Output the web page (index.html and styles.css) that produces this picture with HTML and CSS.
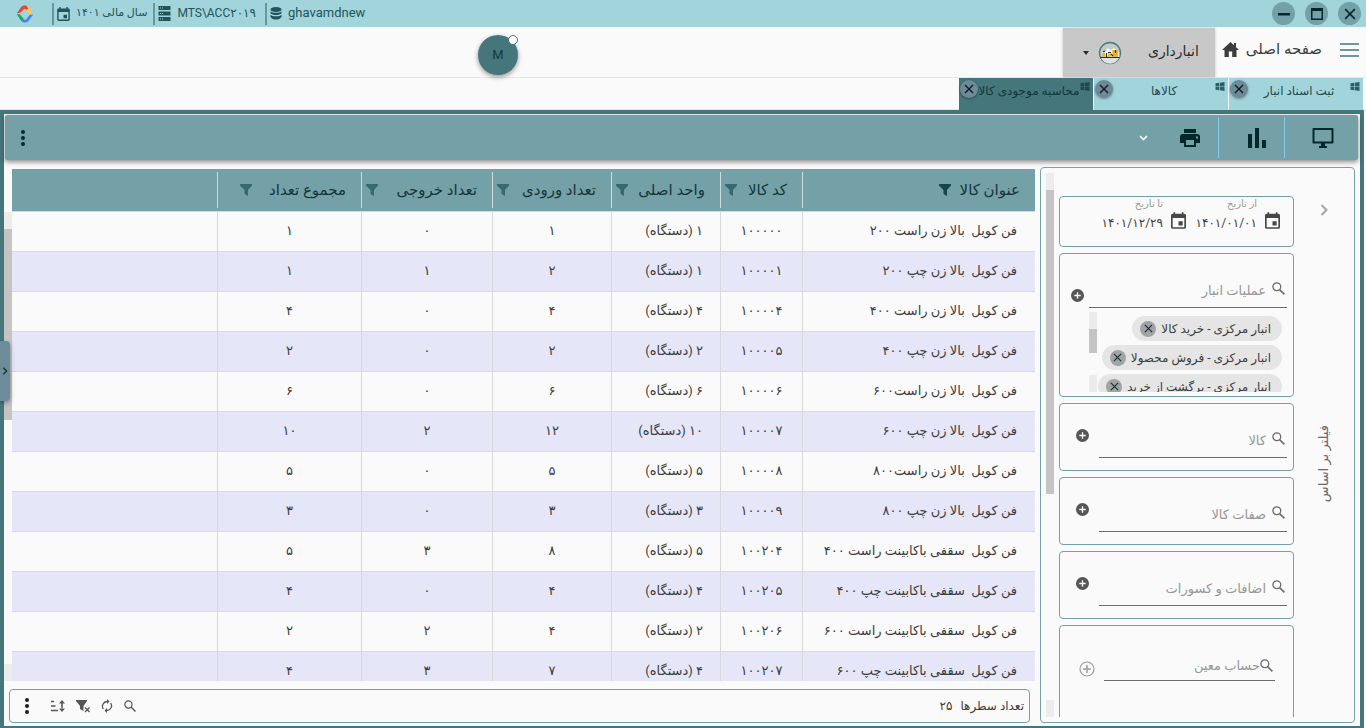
FILE: index.html
```html
<!DOCTYPE html>
<html lang="fa" dir="rtl">
<head>
<meta charset="utf-8">
<title>انبارداری</title>
<link rel="stylesheet" href="styles.css">
</head>
<body>
<svg class="defs" aria-hidden="true">
  <symbol id="funnel" viewBox="0 0 12 12"><path d="M0 0h12v1.500L8 6v6l-3.500-2V6L0 1.500z"/></symbol>
  <symbol id="x" viewBox="0 0 10 10"><path d="M1 1l8 8M9 1l-8 8" fill="none" stroke="currentColor" stroke-width="1.400"/></symbol>
  <symbol id="win" viewBox="0 0 10 10"><path d="M0 1.500l4.300-.7v3.900H0zM5 .7L10 0v4.700H5zM0 5.400h4.300v3.900L0 8.600zM5 5.400h5V10l-5-.7z"/></symbol>
  <symbol id="search" viewBox="0 0 13 13"><circle cx="4.800" cy="4.800" r="3.900" fill="none" stroke="currentColor" stroke-width="1.300"/><path d="M7.600 7.600l4.800 4.800" stroke="currentColor" stroke-width="1.500"/></symbol>
  <symbol id="cal" viewBox="0 0 18 20"><path d="M16 2h-1V0h-2v2H5V0H3v2H2a2 2 0 0 0-2 2v14a2 2 0 0 0 2 2h14a2 2 0 0 0 2-2V4a2 2 0 0 0-2-2zm0 16H2V7h14zm-2-7H9v5h5z" fill-rule="evenodd"/></symbol>
  <symbol id="plus" viewBox="0 0 20 20"><path d="M10 0a10 10 0 1 0 0 20 10 10 0 0 0 0-20zm5 11h-4v4H9v-4H5V9h4V5h2v4h4z"/></symbol>
  <symbol id="dots" viewBox="0 0 4 16"><circle cx="2" cy="2" r="2"/><circle cx="2" cy="8" r="2"/><circle cx="2" cy="14" r="2"/></symbol>
  <symbol id="chev" viewBox="0 0 8 12"><path d="M1.500 1l5 5-5 5" fill="none" stroke="currentColor" stroke-width="2"/></symbol>
</svg>

<header class="titlebar">
  <div class="win-buttons">
    <button aria-label="بستن"><svg width="12" height="12"><use href="#x"/></svg></button>
    <button aria-label="بزرگ‌نمایی"><svg width="12" height="12" viewBox="0 0 12 12"><path d="M0 0h12v12H0zM1.500 3v7.500h9V3z" fill-rule="evenodd"/></svg></button>
    <button aria-label="کوچک‌نمایی"><svg width="12" height="12" viewBox="0 0 12 12"><path d="M0 5h12v2.500H0z"/></svg></button>
  </div>
  <div class="status" dir="ltr">
    <svg class="logo" width="18" height="18" viewBox="0 0 18 18"><path d="M.8 8.500L5 2.200Q6 .6 8 .6h2.500l2.300 3-2 1.600L9.500 4H8L4.800 7.500z" fill="#dc4b3f"/><path d="M10.500 .6q1.500.4 2.300 1.600l4.400 6.300-4 1.300L10 5.500l2.300-1.800z" fill="#fbc94f"/><path d="M17.200 9.500l-4.500 6.300q-1 1.600-2.700 1.600H8q-1.600 0-2.600-1.400l2.400-2 1 .7h1l4-5z" fill="#4387f5"/><path d="M.8 9.300h3l4 4.700-2.400 2.200z" fill="#1da462"/></svg>
    <span class="status-item"><svg width="13" height="14"><use href="#cal"/></svg><span class="fa" dir="rtl">سال مالی ۱۴۰۱</span></span>
    <span class="status-item"><svg width="13" height="15" viewBox="0 0 13 15"><path d="M.5 0h12v4H.5zM.5 5.500h12v4H.5zM.5 11h12v4H.5z"/><path d="M2 2h1M4 2h1M2 7.500h1M4 7.500h1M2 13h1M4 13h1" stroke="#a2d4dc"/></svg><span class="server">MTS\ACC۲۰۱۹</span></span>
    <span class="status-item"><svg width="12" height="13" viewBox="0 0 12 13"><ellipse cx="6" cy="2.500" rx="5.500" ry="2.500"/><path d="M.5 4.200c2 2 9 2 11 0v2c-2 2.400-9 2.400-11 0zM.5 7.800c2 2 9 2 11 0V10c-2 3.400-9 3.400-11 0z"/></svg><span>ghavamdnew</span></span>
  </div>
</header>

<nav class="menubar">
  <button class="burger" aria-label="منو"><svg width="19" height="14" viewBox="0 0 19 14"><path d="M0 1h19M0 7h19M0 13h19" stroke="#6f95a5" stroke-width="2"/></svg></button>
  <a class="home" href="#"><span>صفحه اصلی</span><svg width="17" height="15" viewBox="0 0 17 15"><path d="M8.500 0L0 8h2.500v7h4.300V9.500h3.400V15h4.300V8H17l-3-2.800V1h-2v2.300z"/></svg></a>
  <button class="module"><span>انبارداری</span>
    <svg width="24" height="24" viewBox="0 0 24 24"><circle cx="12" cy="12" r="10.500" fill="#c3cacd" stroke="#4a7a80" stroke-width="1.300"/><path d="M3 17h18a10 10 0 0 1-18 0z" fill="#dfe2e4"/><path d="M2.500 15l2-4 4-1 1-3 3 2v1l3-3 5 3 1 6z" fill="#f7f7f5"/><path d="M3 15.500l1-3 3-1v4zM10 15.500v-3h3v3zM14 9h6v7h-5z" fill="#eeb71b"/><path d="M2.500 16.500h19M5 11l2-1M8.500 12v4M13 13l2 2M17.500 9v3M10 11.500h3" stroke="#232a2e" stroke-width="1.200"/></svg>
    <svg width="6" height="4" viewBox="0 0 6 4"><path d="M0 0h6L3 4z"/></svg></button>
  <button class="avatar"><span>M</span><i></i></button>
</nav>

<div class="tabs">
  <div class="tab"><svg class="win" width="10" height="9"><use href="#win"/></svg><a href="#">ثبت اسناد انبار</a><button aria-label="بستن"><svg width="10" height="10"><use href="#x"/></svg></button></div>
  <div class="tab"><svg class="win" width="10" height="9"><use href="#win"/></svg><a href="#">کالاها</a><button aria-label="بستن"><svg width="10" height="10"><use href="#x"/></svg></button></div>
  <div class="tab active"><svg class="win" width="10" height="9"><use href="#win"/></svg><a href="#">محاسبه موجودی کالا</a><button aria-label="بستن"><svg width="10" height="10"><use href="#x"/></svg></button></div>
</div>

<main class="frame">
  <button class="handle" aria-label="باز کردن"><svg width="6" height="8"><use href="#chev"/></svg></button>
  <div class="page">
    <div class="toolbar">
      <button aria-label="نمایش"><svg width="22" height="20" viewBox="0 0 22 20"><path d="M1.500 1h19v13.500h-19z" fill="none" stroke="currentColor" stroke-width="2" stroke-linejoin="round"/><path d="M9 15h4v3h2v2H7v-2h2z"/></svg></button>
      <button aria-label="نمودار"><svg width="18" height="20" viewBox="0 0 18 20"><path d="M0 6h4v14H0zM7 0h4v20H7zM14 12h4v8h-4z"/></svg></button>
      <button aria-label="چاپ"><svg width="20" height="18" viewBox="0 0 20 18"><path d="M4 0h12v4H4zM3 5h14a3 3 0 0 1 3 3v6h-4v4H4v-4H0V8a3 3 0 0 1 3-3zm3 6v5h8v-5zm10-3.500v2h2v-2z" fill-rule="evenodd"/></svg></button>
      <button class="more-print" aria-label="گزینه‌های چاپ"><svg width="9" height="6" viewBox="0 0 9 6"><path d="M1 1l3.500 3.500L8 1" fill="none" stroke="currentColor" stroke-width="1.600"/></svg></button>
      <button class="kebab" aria-label="بیشتر"><svg width="4" height="16"><use href="#dots"/></svg></button>
    </div>

    <div class="content">
      <aside class="filters">
        <div class="rail"><button aria-label="بستن فیلتر"><svg width="8" height="12"><use href="#chev"/></svg></button><span>فیلتر بر اساس</span></div>
        <div class="cards">
          <section class="card dates">
            <svg width="15" height="17"><use href="#cal"/></svg>
            <label>از تاریخ<input value="۱۴۰۱/۰۱/۰۱"></label>
            <svg width="15" height="17"><use href="#cal"/></svg>
            <label>تا تاریخ<input value="۱۴۰۱/۱۲/۲۹"></label>
          </section>
          <section class="card ops">
            <div class="ops-main">
              <div class="field"><svg width="13" height="13"><use href="#search"/></svg><input aria-label="عملیات انبار" placeholder="عملیات انبار"></div>
              <div class="chip-area">
                <div class="chips">
                  <span class="chip">انبار مرکزی - خرید کالا<button aria-label="حذف"><svg width="9" height="9"><use href="#x"/></svg></button></span>
                  <span class="chip">انبار مرکزی - فروش محصولا<button aria-label="حذف"><svg width="9" height="9"><use href="#x"/></svg></button></span>
                  <span class="chip">انبار مرکزی - برگشت از خرید<button aria-label="حذف"><svg width="9" height="9"><use href="#x"/></svg></button></span>
                </div>
                <div class="scroll chip-scroll"><i></i><b></b><i></i></div>
              </div>
            </div>
            <button class="add" aria-label="افزودن"><svg width="13" height="13"><use href="#plus"/></svg></button>
          </section>
          <section class="card single"><div class="field"><svg width="13" height="13"><use href="#search"/></svg><input aria-label="کالا" placeholder="کالا"></div><button class="add" aria-label="افزودن"><svg width="13" height="13"><use href="#plus"/></svg></button></section>
          <section class="card single"><div class="field"><svg width="13" height="13"><use href="#search"/></svg><input aria-label="صفات کالا" placeholder="صفات کالا"></div><button class="add" aria-label="افزودن"><svg width="13" height="13"><use href="#plus"/></svg></button></section>
          <section class="card single"><div class="field"><svg width="13" height="13"><use href="#search"/></svg><input aria-label="اضافات و کسورات" placeholder="اضافات و کسورات"></div><button class="add" aria-label="افزودن"><svg width="13" height="13"><use href="#plus"/></svg></button></section>
          <section class="card account"><div class="field"><svg width="13" height="13"><use href="#search"/></svg><input aria-label="حساب معین" placeholder="حساب معین"></div><button class="add" aria-label="افزودن"><svg width="16" height="16" viewBox="0 0 16 16"><circle cx="8" cy="8" r="7" fill="none" stroke="currentColor" stroke-width="1.200"/><path d="M8 4v8M4 8h8" stroke="currentColor" stroke-width="1.500"/></svg></button></section>
        </div>
        <div class="scroll filter-scroll"><i></i><b></b><i></i></div>
      </aside>

      <section class="grid">
        <div class="table-area">
          <div class="table-clip">
            <table>
              <colgroup><col class="c-title"><col class="c-code"><col class="c-unit"><col class="c-in"><col class="c-out"><col class="c-sum"><col></colgroup>
              <thead><tr>
                <th class="title"><div>عنوان کالا<svg width="12" height="12"><use href="#funnel"/></svg></div></th>
                <th><div>کد کالا<svg width="12" height="12"><use href="#funnel"/></svg></div></th>
                <th><div>واحد اصلی<svg width="12" height="12"><use href="#funnel"/></svg></div></th>
                <th><div>تعداد ورودی<svg width="12" height="12"><use href="#funnel"/></svg></div></th>
                <th><div>تعداد خروجی<svg width="12" height="12"><use href="#funnel"/></svg></div></th>
                <th class="sum"><div>مجموع تعداد<svg width="12" height="12"><use href="#funnel"/></svg></div></th>
                <th></th>
              </tr></thead>
              <tbody>
                <tr><td>فن کویل  بالا زن راست ۲۰۰</td><td>۱۰۰۰۰۰</td><td>۱ (دستگاه)</td><td>۱</td><td>۰</td><td>۱</td><td></td></tr>
                <tr><td>فن کویل  بالا زن چپ ۲۰۰</td><td>۱۰۰۰۰۱</td><td>۱ (دستگاه)</td><td>۲</td><td>۱</td><td>۱</td><td></td></tr>
                <tr><td>فن کویل  بالا زن راست ۴۰۰</td><td>۱۰۰۰۰۴</td><td>۴ (دستگاه)</td><td>۴</td><td>۰</td><td>۴</td><td></td></tr>
                <tr><td>فن کویل  بالا زن چپ ۴۰۰</td><td>۱۰۰۰۰۵</td><td>۲ (دستگاه)</td><td>۲</td><td>۰</td><td>۲</td><td></td></tr>
                <tr><td>فن کویل  بالا زن راست۶۰۰</td><td>۱۰۰۰۰۶</td><td>۶ (دستگاه)</td><td>۶</td><td>۰</td><td>۶</td><td></td></tr>
                <tr><td>فن کویل  بالا زن چپ ۶۰۰</td><td>۱۰۰۰۰۷</td><td>۱۰ (دستگاه)</td><td>۱۲</td><td>۲</td><td>۱۰</td><td></td></tr>
                <tr><td>فن کویل  بالا زن راست۸۰۰</td><td>۱۰۰۰۰۸</td><td>۵ (دستگاه)</td><td>۵</td><td>۰</td><td>۵</td><td></td></tr>
                <tr><td>فن کویل  بالا زن چپ ۸۰۰</td><td>۱۰۰۰۰۹</td><td>۳ (دستگاه)</td><td>۳</td><td>۰</td><td>۳</td><td></td></tr>
                <tr><td>فن کویل  سقفی باکابینت راست ۴۰۰</td><td>۱۰۰۲۰۴</td><td>۵ (دستگاه)</td><td>۸</td><td>۳</td><td>۵</td><td></td></tr>
                <tr><td>فن کویل  سقفی باکابینت چپ ۴۰۰</td><td>۱۰۰۲۰۵</td><td>۴ (دستگاه)</td><td>۴</td><td>۰</td><td>۴</td><td></td></tr>
                <tr><td>فن کویل  سقفی باکابینت راست ۶۰۰</td><td>۱۰۰۲۰۶</td><td>۲ (دستگاه)</td><td>۴</td><td>۲</td><td>۲</td><td></td></tr>
                <tr><td>فن کویل  سقفی باکابینت چپ ۶۰۰</td><td>۱۰۰۲۰۷</td><td>۴ (دستگاه)</td><td>۷</td><td>۳</td><td>۴</td><td></td></tr>
              </tbody>
            </table>
          </div>
          <div class="scroll table-scroll"><i></i><b></b><i></i></div>
        </div>
        <footer class="gridbar">
          <span>تعداد سطرها</span><span class="count">۲۵</span>
          <div class="gridbar-tools">
            <button aria-label="جستجو"><svg width="12" height="12"><use href="#search"/></svg></button>
            <button aria-label="بازخوانی"><svg width="12" height="14" viewBox="0 0 12 14"><path d="M2.300 10A4.800 4.800 0 0 1 6 2.500M9.700 4A4.800 4.800 0 0 1 6 11.500" fill="none" stroke="currentColor" stroke-width="1.300"/><path d="M6 0v5l2.500-2.500zM6 9v5L3.500 11.500z"/></svg></button>
            <button aria-label="حذف فیلتر"><svg width="14" height="14" viewBox="0 0 14 14"><path d="M0 1h11v1L7.500 7v5L4 10V7L0 2z"/><path d="M9 8.500l4.500 4.500M13.500 8.500L9 13" stroke="currentColor" stroke-width="1.300"/></svg></button>
            <button aria-label="مرتب‌سازی"><svg width="14" height="12" viewBox="0 0 14 12"><path d="M0 1.500h3M0 6h4.500M0 10.500h7" stroke="currentColor" stroke-width="1.500"/><path d="M10.200 3h1.600v6h-1.600zM11 0l3 3.500H8zM11 12l3-3.500H8z"/></svg></button>
            <button class="kebab" aria-label="بیشتر"><svg width="4" height="16"><use href="#dots"/></svg></button>
          </div>
        </footer>
      </section>
    </div>
  </div>
</main>
</body>
</html>
```

FILE: styles.css
```css
* { box-sizing: border-box; }
body {
  margin: 0;
  height: 100vh;
  display: flex;
  flex-direction: column;
  overflow: hidden;
  background: #fafafa;
  color: #3c3c3c;
  font: 13px/20px Roboto, "DejaVu Sans", sans-serif;
}
button, input { font: inherit; color: inherit; border: 0; background: none; padding: 0; margin: 0; }
button { display: flex; align-items: center; justify-content: center; flex: none; }
a { color: inherit; text-decoration: none; }
svg { display: block; flex: none; fill: currentColor; }
.defs { position: absolute; width: 0; height: 0; }

.titlebar {
  flex: none;
  height: 27px;
  background: #a2d4dc;
  color: #1f5459;
  display: flex;
  justify-content: space-between;
}
.win-buttons { display: flex; align-items: center; gap: 10px; padding-right: 5px; }
.win-buttons button { width: 23px; height: 23px; border-radius: 50%; background: #73a1a7; color: #03282c; }
.status { display: flex; align-items: center; padding-left: 16px; }
.logo { margin-right: 18px; }
.status-item { display: flex; align-items: center; gap: 6px; height: 22px; padding: 0 6px 0 3px; border-left: 2px solid #6499a0; }
.status-item span { line-height: 18px; margin-bottom: 2px; }
.status-item .fa { font-size: 11px; }
.status-item .server { font-size: 12px; margin-right: 3px; }

.menubar {
  flex: none;
  height: 51px;
  display: flex;
  align-items: flex-start;
  border-bottom: 1px solid #e6e6e6;
  padding: 1px 7px 0 0;
}
.burger { width: 19px; height: 44px; }
.home { display: flex; align-items: center; gap: 7px; height: 42px; margin: 0 18px 0 7px; font-size: 15px; }
.module {
  width: 152px;
  height: 49px;
  background: #c8c8c8;
  box-shadow: 0 0 3px #c0c0c0;
  font-size: 14px;
  justify-content: flex-start;
  padding-right: 16px;
  color: #2b2b2b;
}
.module span { margin: 0 0 4px 26px; }
.module svg + svg { margin-right: 9px; }
.avatar {
  position: relative;
  width: 40px;
  height: 40px;
  margin: 7px auto 0 478px;
  border-radius: 50%;
  background: #45767b;
  color: #17393d;
  box-shadow: 0 2px 5px rgba(0, 0, 0, .4);
  font-size: 13px;
}
.avatar i { position: absolute; top: 0; right: 0; width: 10px; height: 10px; border: 1px solid #45767b; border-radius: 50%; background: #fff; }

.tabs { flex: none; height: 32px; display: flex; gap: 1px; padding-right: 3px; border-bottom: 1px solid #e6e6e6; }
.tab { display: flex; align-items: flex-start; justify-content: space-between; width: 134px; height: 32px; padding: 2px 3px 0 1px; background: #a2d4dc; color: #28474b; font-size: 12px; }
.tab .win { margin-top: 2px; color: #2a6064; }
.tab a { line-height: 22px; white-space: nowrap; }
.tab button { width: 18px; height: 18px; border-radius: 50%; background: #6d8a9a; color: #16191b; box-shadow: 0 1px 3px rgba(0, 0, 0, .35); }
.tab.active { background: #45767b; color: #14363a; }
.tab.active .win { color: #1c4b50; }

.frame { position: relative; flex: 1; min-height: 0; display: flex; margin-right: 2px; padding: 4px 4px 2px; background: #45767b; }
.page { flex: 1; min-width: 0; display: flex; flex-direction: column; background: #fafafa; }
.handle { position: absolute; left: 0; top: 231px; width: 10px; height: 60px; border-radius: 0 4px 4px 0; background: #6d8c99; color: #0f383d; box-shadow: 0 2px 5px rgba(0, 0, 0, .35); }

.toolbar {
  flex: none;
  display: flex;
  height: 45px;
  margin: 1px 2px 0 1px;
  padding-right: 8px;
  border-radius: 2px;
  background: #73a1a7;
  color: #03282c;
  box-shadow: 0 2px 5px rgba(0, 0, 0, .45);
}
.toolbar button { width: 66px; height: 41px; margin-top: 2px; padding-left: 10px; border-left: 1px solid #82cdf0; }
.toolbar button:nth-child(3) { width: 56px; padding: 0; border: 0; }
.toolbar .more-print { width: 38px; padding: 0; border: 0; color: #fff; }
.toolbar .kebab { width: 36px; padding: 0; margin-right: auto; border: 0; }

.content { flex: 1; min-height: 0; display: flex; padding: 7px 5px 3px 0; }
.scroll { width: 8px; flex: none; display: flex; flex-direction: column; }
.scroll i { height: 17px; flex: none; background: #ececec; }
.scroll b { background: #c4c4c4; }
.scroll i:last-child { margin-top: auto; }

.filters { flex: none; width: 315px; display: flex; border: 1px solid #73a1a7; border-radius: 4px; padding: 5px 0 5px 5px; }
.rail { width: 60px; display: flex; flex-direction: column; align-items: center; padding-top: 31px; color: #6b6b6b; }
.rail button { color: #a5a5a5; }
.rail span { writing-mode: vertical-rl; transform: rotate(180deg); margin-top: 209px; }
.cards { flex: 1; min-width: 0; display: flex; flex-direction: column; gap: 6px; padding: 23px 0 0 5px; overflow: hidden; }
.card { flex: none; display: flex; border: 1px solid #73a1a7; border-radius: 4px; }
.filter-scroll b { height: 304px; }

.dates { height: 51px; padding: 0 13px 0 0; color: #474747; }
.dates svg { margin-top: 15px; }
.dates label { display: block; width: 64px; margin: 0 8px 0 7px; font-size: 10px; line-height: 14px; color: #979797; }
.dates input { display: block; width: 100%; height: 23px; font-size: 12px; color: #3c3c3c; }

.field { flex: 1; min-width: 0; display: flex; gap: 6px; border-bottom: 1px solid #6a6a6a; color: #6a6a6a; }
.field input { flex: 1; min-width: 0; height: 18px; }
.field input::placeholder { color: #979797; opacity: 1; }
.add { color: #565656; }

.ops { height: 144px; padding: 28px 6px 5px 11px; align-items: flex-start; }
.ops-main { flex: 1; min-width: 0; height: 110px; display: flex; flex-direction: column; }
.ops .field { flex: none; height: 26px; padding-right: 2px; }
.ops .add { width: 18px; height: 26px; justify-content: flex-end; }
.chip-area { flex: 1; min-height: 0; display: flex; padding-top: 4px; }
.chips { flex: 1; min-width: 0; display: flex; flex-direction: column; gap: 4px; overflow: hidden; padding: 4px 5px 0 0; }
.chip { flex: none; align-self: flex-start; display: flex; align-items: center; height: 25px; padding: 0 11px 0 8px; gap: 5px; border-radius: 13px; background: #e5e5e5; font-size: 12px; white-space: nowrap; }
.chip button { width: 16px; height: 16px; border-radius: 50%; background: #a3a3a3; color: #12383c; }
.chip-scroll b { height: 24px; }

.single { height: 68px; padding: 28px 6px 12px 16px; }
.single .field { padding-right: 2px; }
.single .add { width: 23px; height: 7px; justify-content: flex-end; }
.account { height: 110px; padding: 28px 18px 0 19px; }
.account .field { height: 27px; gap: 0; padding-right: 2px; }
.account .field svg { margin-top: 5px; }
.account .field input { height: 22px; }
.account .add { width: 25px; height: 30px; justify-content: flex-end; color: #9c9c9c; }

.grid { flex: 1; min-width: 0; display: flex; flex-direction: column; margin-right: 5px; }
.table-area { flex: 1; min-height: 0; display: flex; padding-top: 2px; }
.table-clip { flex: 1; min-width: 0; overflow: hidden; }
.table-scroll { padding-top: 43px; }
.table-scroll b { height: 191px; }
table { width: 100%; table-layout: fixed; border-collapse: separate; border-spacing: 0; }
.c-title { width: 233px; }
.c-code { width: 82px; }
.c-unit { width: 109px; }
.c-in { width: 119px; }
.c-out { width: 131px; }
.c-sum { width: 144px; }
th { height: 43px; padding: 0; background: #73a1a7; border-bottom: 1px solid #d9d9d9; color: #14363a; font-size: 15px; font-weight: 400; white-space: nowrap; }
th div { display: flex; align-items: center; justify-content: space-between; height: 36px; padding: 0 15px 0 4px; border-left: 1px solid #d0dadb; }
th.title div { justify-content: flex-start; gap: 9px; }
th.sum div { padding-left: 22px; }
th svg { color: #376a70; }
th.title svg { color: #14464b; }
td { height: 40px; padding: 0 6px 2px; border-bottom: 1px solid #d9d9d9; border-left: 1px solid #d9d9d9; text-align: center; white-space: pre; }
td:first-child { padding-right: 18px; text-align: right; }
td:nth-child(3) { padding-right: 17px; text-align: right; }
td:last-child { border-left: 0; }
tbody tr:nth-child(even) { background: #e5e6f8; }

.gridbar { flex: none; display: flex; align-items: center; height: 34px; margin: 8px 5px 0 5px; padding: 0 5px 0 8px; border: 1px solid #73a1a7; border-radius: 4px; font-size: 12px; }
.gridbar .count { margin-right: 8px; }
.gridbar-tools { display: flex; align-items: center; gap: 11px; margin-right: auto; color: #565656; }
.gridbar-tools .kebab { width: 18px; margin-right: 4px; color: #1d1d1d; }
```
